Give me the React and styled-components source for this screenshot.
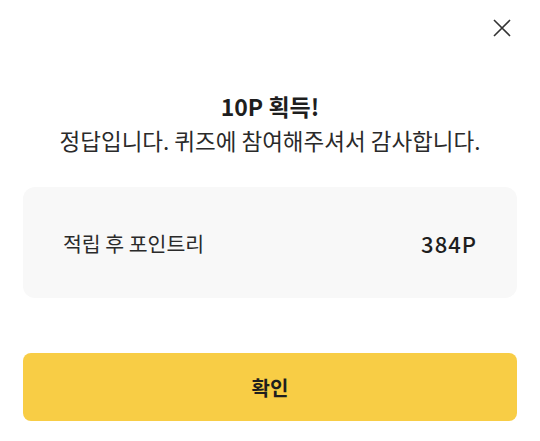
import styled, { createGlobalStyle } from "styled-components";

const GlobalStyle = createGlobalStyle`
  html, body {
    margin: 0;
    padding: 0;
    background: #ffffff;
    font-family: "Noto Sans CJK KR", "Noto Sans", sans-serif;
    color: #222222;
  }
`;

const Sheet = styled.div`
  width: 540px;
  height: 441px;
  box-sizing: border-box;
  padding: 0 23px;
  display: flex;
  flex-direction: column;
  background: #ffffff;
`;

const TopBar = styled.div`
  height: 56px;
  display: flex;
  justify-content: flex-end;
  align-items: center;
`;

const CloseButton = styled.button`
  width: 40px;
  height: 40px;
  margin-right: -5px;
  border: none;
  background: none;
  padding: 0;
  display: flex;
  align-items: center;
  justify-content: center;
  cursor: pointer;
`;

const Heading = styled.div`
  margin-top: 34px;
  display: flex;
  flex-direction: column;
  align-items: center;
  gap: 2px;
`;

const Title = styled.div`
  font-size: 23px;
  font-weight: 700;
  line-height: 32px;
  color: #1e1e1e;
`;

const Message = styled.div`
  font-size: 22.5px;
  font-weight: 400;
  line-height: 32px;
  color: #2a2a2a;
`;

const PointCard = styled.div`
  margin-top: 31px;
  height: 111px;
  flex-shrink: 0;
  border-radius: 12px;
  background: #f8f8f8;
  display: flex;
  align-items: center;
  justify-content: space-between;
  padding: 0 40px;
`;

const Label = styled.span`
  font-size: 20.5px;
  color: #2a2a2a;
`;

const Value = styled.span`
  font-size: 22px;
  font-weight: 500;
  letter-spacing: 1px;
  color: #1e1e1e;
`;

const ConfirmButton = styled.button`
  margin-top: 55px;
  height: 68px;
  flex-shrink: 0;
  border: none;
  border-radius: 8px;
  background: #f8cd45;
  font-family: inherit;
  font-size: 20px;
  font-weight: 700;
  color: #1e1e1e;
  cursor: pointer;
`;

const App = () => {
  return (
    <>
      <GlobalStyle />
      <Sheet>
        <TopBar>
          <CloseButton aria-label="닫기">
            <svg width="20" height="20" viewBox="0 0 20 20">
              <path d="M2 2 L18 18 M18 2 L2 18" stroke="#333" strokeWidth="1.6" fill="none" />
            </svg>
          </CloseButton>
        </TopBar>
        <Heading>
          <Title>10P 획득!</Title>
          <Message>정답입니다. 퀴즈에 참여해주셔서 감사합니다.</Message>
        </Heading>
        <PointCard>
          <Label>적립 후 포인트리</Label>
          <Value>384P</Value>
        </PointCard>
        <ConfirmButton>확인</ConfirmButton>
      </Sheet>
    </>
  );
};

export default App;
